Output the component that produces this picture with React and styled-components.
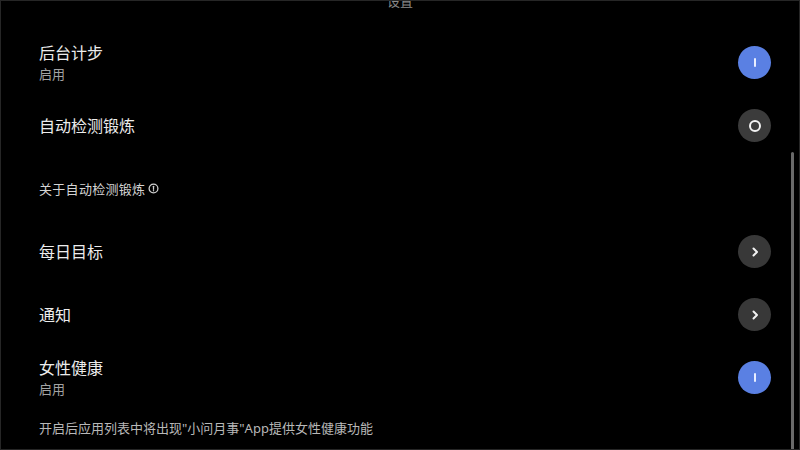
import React from 'react';
import styled, { createGlobalStyle } from 'styled-components';

const GlobalStyle = createGlobalStyle`
  html, body {
    margin: 0;
    padding: 0;
    background: #000;
  }
  body {
    font-family: "Noto Sans", "Noto Sans CJK SC", sans-serif;
  }
`;

const items = [
  { id: 'steps', title: '后台计步', sub: '启用', control: 'on' },
  { id: 'auto', title: '自动检测锻炼', control: 'off' },
  { id: 'about', link: '关于自动检测锻炼' },
  { id: 'goal', title: '每日目标', control: 'arrow' },
  { id: 'notify', title: '通知', control: 'arrow' },
  { id: 'women', title: '女性健康', sub: '启用', control: 'on' },
];

function Control({ type }) {
  if (type === 'on') {
    return (
      <Knob $bg="#5a80e3">
        <OnBar />
      </Knob>
    );
  }
  if (type === 'off') {
    return (
      <Knob $bg="#3b3b3b">
        <OffRing />
      </Knob>
    );
  }
  return (
    <Knob $bg="#383838">
      <svg width="12" height="12" viewBox="0 0 12 12">
        <path d="M4.5 2.5 L8 6 L4.5 9.5" fill="none" stroke="#f2f2f2" strokeWidth="2" strokeLinecap="round" strokeLinejoin="round" />
      </svg>
    </Knob>
  );
}

function App() {
  return (
    <>
      <GlobalStyle />
      <Screen>
        <Header>
          <HeaderTitle>设置</HeaderTitle>
        </Header>
        <List>
          {items.map((item) =>
            item.link ? (
              <Row key={item.id}>
                <LinkText>
                  {item.link}
                  <svg width="11" height="11" viewBox="0 0 12 12">
                    <circle cx="6" cy="6" r="4.8" fill="none" stroke="#d0d0d0" strokeWidth="1.4" />
                    <path d="M6 3.6 V6.8" stroke="#d0d0d0" strokeWidth="1.4" strokeLinecap="round" />
                    <circle cx="6" cy="8.5" r="0.8" fill="#d0d0d0" />
                  </svg>
                </LinkText>
              </Row>
            ) : (
              <Row key={item.id}>
                <TextBlock>
                  <Title>{item.title}</Title>
                  {item.sub && <Sub>{item.sub}</Sub>}
                </TextBlock>
                <Control type={item.control} />
              </Row>
            )
          )}
        </List>
        <Footer>开启后应用列表中将出现"小问月事"App提供女性健康功能</Footer>
        <ScrollBar />
      </Screen>
    </>
  );
}

const Screen = styled.div`
  position: relative;
  width: 800px;
  height: 450px;
  box-sizing: border-box;
  border: 1px solid #262626;
  background: #000;
  overflow: hidden;
  display: flex;
  flex-direction: column;
`;

const Header = styled.div`
  height: 30px;
  display: flex;
  justify-content: center;
  align-items: flex-start;
`;

const HeaderTitle = styled.span`
  margin-top: -8px;
  font-size: 13px;
  line-height: 16px;
  color: #8a8a8a;
`;

const List = styled.div`
  display: flex;
  flex-direction: column;
`;

const Row = styled.div`
  height: 63px;
  display: flex;
  align-items: center;
  justify-content: space-between;
  padding: 0 28px 0 38px;
`;

const TextBlock = styled.div`
  display: flex;
  flex-direction: column;
`;

const Title = styled.div`
  font-size: 16px;
  line-height: 20px;
  color: #ececec;
`;

const Sub = styled.div`
  font-size: 13px;
  line-height: 18px;
  color: #a3a3a3;
  margin-top: 2px;
`;

const LinkText = styled.div`
  display: flex;
  align-items: center;
  gap: 3px;
  font-size: 13px;
  line-height: 18px;
  color: #d4d4d4;
  letter-spacing: 0.3px;
`;

const Knob = styled.div`
  width: 33px;
  height: 33px;
  border-radius: 50%;
  background: ${(p) => p.$bg};
  display: flex;
  align-items: center;
  justify-content: center;
`;

const OnBar = styled.div`
  width: 2px;
  height: 9px;
  border-radius: 1px;
  background: #e8eeff;
`;

const OffRing = styled.div`
  width: 8px;
  height: 8px;
  border-radius: 50%;
  border: 2px solid #f2f2f2;
`;

const Footer = styled.div`
  padding: 10px 0 0 38px;
  font-size: 13px;
  line-height: 18px;
  color: #b8b8b8;
`;

const ScrollBar = styled.div`
  position: absolute;
  right: 5px;
  top: 151px;
  bottom: 0;
  width: 3px;
  border-radius: 2px 2px 0 0;
  background: #6a6a6a;
`;

export default App;
